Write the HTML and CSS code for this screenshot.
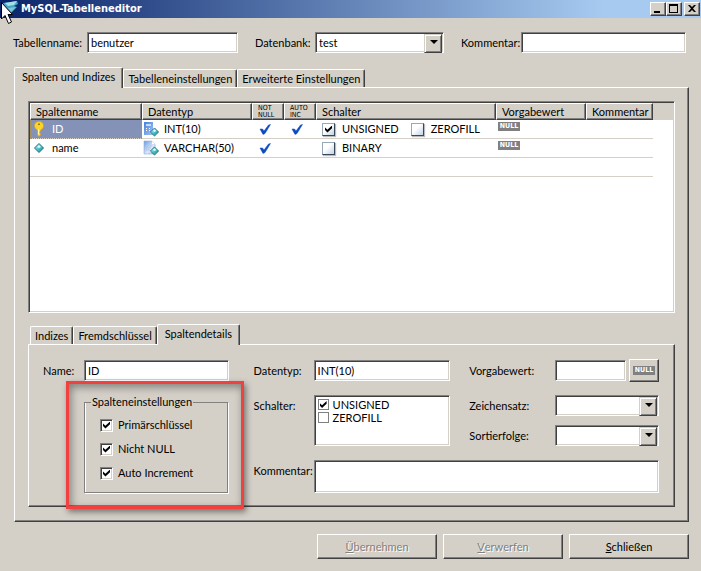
FILE: index.html
```html
<!DOCTYPE html>
<html lang="de">
<head>
<meta charset="utf-8">
<title>MySQL-Tabelleneditor</title>
<link rel="stylesheet" href="styles.css">
</head>
<body>
<svg width="0" height="0" class="defs" aria-hidden="true">
  <defs>
    <linearGradient id="gem" x1="0" y1="0" x2="1" y2="1"><stop offset="0" stop-color="#b8f4f4"/><stop offset=".5" stop-color="#4cc4cc"/><stop offset="1" stop-color="#187c90"/></linearGradient>
    <linearGradient id="sheet" x1="0" y1="0" x2="1" y2="1"><stop offset="0" stop-color="#6c9ce4"/><stop offset=".6" stop-color="#dce8f8"/><stop offset="1" stop-color="#a0bcec"/></linearGradient>
    <linearGradient id="calc" x1="0" y1="0" x2="1" y2="1"><stop offset="0" stop-color="#4880dc"/><stop offset="1" stop-color="#a4c4f4"/></linearGradient>
    <symbol id="tick" viewBox="0 0 12 11"><path d="M1 5 3.500 5l1.500 2L9.500 1 11.500 .5 6 9.500 4 10.500Z" fill="#0c4cc0" stroke="#0c4cc0" stroke-width=".5"/></symbol>
    <symbol id="diamond" viewBox="0 0 10 10"><path d="M5 .5 9.500 5 5 9.500 .5 5Z" fill="url(#gem)" stroke="#286c7c" stroke-width="1"/><path d="M5 2 7 4 5 5 3 4Z" fill="#d8ffff"/></symbol>
  </defs>
</svg>
<header class="titlebar">
  <svg class="app-icon" viewBox="0 0 19 18" width="19" height="18" aria-hidden="true">
    <path d="M3 3 17 1 18 4 14 6 17 7 11 13 7 12Z" fill="#48a4c0"/><path d="M5 3 17 1 14 5 8 6Z" fill="#a4e0ec"/><path d="M8 8 16 7 11 12Z" fill="#78c8dc"/>
  </svg>
  <h1>MySQL-Tabelleneditor</h1>
  <div class="window-buttons">
    <button type="button" aria-label="Minimieren"><svg viewBox="0 0 12 10" width="12" height="10"><path d="M2 7h6v2H2z"/></svg></button>
    <button type="button" aria-label="Maximieren"><svg viewBox="0 0 12 10" width="12" height="10"><path fill-rule="evenodd" d="M1 0h9v9H1zM2 2v6h7V2z"/></svg></button>
    <button type="button" class="close" aria-label="Fenster schließen"><svg viewBox="0 0 12 10" width="12" height="10"><path d="M2 1h2l2 2 2-2h2L7 4.500 10 8H8L6 6 4 8H2l3-3.500z"/></svg></button>
  </div>
  <svg class="cursor" viewBox="0 0 12 22" width="12" height="22" aria-hidden="true"><path d="M.5.5V17L4 13.500 7.500 21.500 10.500 20 7 12.500H11.500Z" fill="#fff" stroke="#000"/></svg>
</header>
<main>
  <form class="top-fields">
    <label for="tname">Tabellenname:</label>
    <input class="field" id="tname" value="benutzer">
    <label for="db">Datenbank:</label>
    <span class="combo"><select id="db" class="field"><option>test</option></select></span>
    <label for="tcomment">Kommentar:</label>
    <input class="field" id="tcomment">
  </form>

  <nav class="tabs" role="tablist">
    <button type="button" role="tab" aria-selected="true">Spalten und Indizes</button>
    <button type="button" role="tab">Tabelleneinstellungen</button>
    <button type="button" role="tab">Erweiterte Einstellungen</button>
  </nav>
  <section class="page outer">
    <div class="list">
      <table>
        <colgroup><col class="c-name"><col class="c-type"><col class="c-flag"><col class="c-flag"><col class="c-opts"><col class="c-default"><col class="c-comment"><col></colgroup>
        <thead><tr><th>Spaltenname</th><th>Datentyp</th><th class="tiny">NOT<br>NULL</th><th class="tiny">AUTO<br>INC</th><th>Schalter</th><th>Vorgabewert</th><th>Kommentar</th><td class="rest"></td></tr></thead>
        <tbody>
          <tr>
            <td class="selected"><div class="cell"><svg class="lead" viewBox="0 0 10 16" width="10" height="16"><path d="M5 .5C2 .5 .5 2.500 .5 4.500 .5 6.500 1.500 8 3.500 9V14L5 15.500 6.500 14V12.500L5.500 11.500 6.500 10.500V9C8.500 8 9.500 6.500 9.500 4.500 9.500 2.500 8 .5 5 .5Z" fill="#fcd428" stroke="#d8a010" stroke-width=".6"/><path d="M4 2.500h2v1.500H4z" fill="#94801c"/><path d="M4.500 8v5.500" stroke="#fff4a0"/></svg>ID</div></td>
            <td><div class="cell type"><svg viewBox="0 0 16 16" width="16" height="16"><path d="M1 1h9v13H1z" fill="url(#calc)"/><path d="M3 3h5v2H3z" fill="#c4dcfc"/><path d="M3 7h1v1H3zM6 7h1v1H6zM3 9h1v1H3zM6 9h1v1H6z" fill="#fff"/><use href="#diamond" x="7" y="6" width="9" height="10"/></svg>INT(10)</div></td>
            <td><svg class="tick" width="12" height="11"><use href="#tick"/></svg></td>
            <td><svg class="tick" width="12" height="11"><use href="#tick"/></svg></td>
            <td><div class="options"><label><input type="checkbox" class="glass" checked>UNSIGNED</label><label><input type="checkbox" class="glass">ZEROFILL</label></div></td>
            <td class="null-cell"><span class="null">NULL</span></td><td></td><td class="rest"></td>
          </tr>
          <tr>
            <td><div class="cell"><svg class="lead" viewBox="0 0 10 10" width="10" height="10"><use href="#diamond"/></svg>name</div></td>
            <td><div class="cell type"><svg viewBox="0 0 16 16" width="16" height="16"><path d="M1 1h8l3 3v10H1z" fill="url(#sheet)" stroke="#90b0dc" stroke-width=".6"/><path d="M9 1v3h3z" fill="#fff"/><path d="M3 6h6M3 8h5M3 10h4" stroke="#b4c8e4"/><use href="#diamond" x="7" y="6" width="9" height="10"/></svg>VARCHAR(50)</div></td>
            <td><svg class="tick" width="12" height="11"><use href="#tick"/></svg></td>
            <td></td>
            <td><div class="options"><label><input type="checkbox" class="glass">BINARY</label></div></td>
            <td class="null-cell"><span class="null">NULL</span></td><td></td><td class="rest"></td>
          </tr>
          <tr><td></td><td></td><td></td><td></td><td></td><td></td><td></td><td class="rest"></td></tr>
        </tbody>
      </table>
    </div>

    <nav class="tabs lower" role="tablist">
      <button type="button" role="tab">Indizes</button>
      <button type="button" role="tab">Fremdschlüssel</button>
      <button type="button" role="tab" aria-selected="true">Spaltendetails</button>
    </nav>
    <form class="page details">
      <label for="cname">Name:</label>
      <input class="field" id="cname" value="ID">
      <label class="mid" for="ctype">Datentyp:</label>
      <input class="field" id="ctype" value="INT(10)">
      <label class="right" for="cdefault">Vorgabewert:</label>
      <div class="default"><input class="field" id="cdefault"><button type="button" class="raised"><span class="null">NULL</span></button></div>

      <div class="settings">
        <fieldset>
          <legend>Spalteneinstellungen</legend>
          <label><input type="checkbox" class="box" checked>Primärschlüssel</label>
          <label><input type="checkbox" class="box" checked>Nicht NULL</label>
          <label><input type="checkbox" class="box" checked>Auto Increment</label>
        </fieldset>
        <div class="marker"></div>
      </div>

      <span class="mid label flags-label" id="flags">Schalter:</span>
      <div class="field checklist" role="group" aria-labelledby="flags">
        <label><input type="checkbox" class="flat" checked>UNSIGNED</label>
        <label><input type="checkbox" class="flat">ZEROFILL</label>
      </div>
      <div class="charset">
        <label for="charset">Zeichensatz:</label>
        <span class="combo"><select class="field" id="charset"><option></option></select></span>
        <label for="collation">Sortierfolge:</label>
        <span class="combo"><select class="field" id="collation"><option></option></select></span>
      </div>
      <label class="mid comment-label" for="ccomment">Kommentar:</label>
      <textarea class="field" id="ccomment"></textarea>
    </form>
  </section>
  <footer>
    <button type="button" class="raised" disabled><u>Ü</u>bernehmen</button>
    <button type="button" class="raised" disabled><u>V</u>erwerfen</button>
    <button type="button" class="raised"><u>S</u>chließen</button>
  </footer>
</main>
</body>
</html>
```
FILE: styles.css
```css
:root {
  --face: #d4d0c8;
  --shade: #808080;
  --dark: #404040;
}
* { box-sizing: border-box; }
body {
  margin: 0;
  background: var(--face);
  color: #000;
  font: 11px/14px Lato, "Liberation Sans", sans-serif;
}
button, input, select, textarea { font: inherit; color: inherit; margin: 0; border-radius: 0; }
.defs { position: absolute; }

.titlebar {
  position: relative;
  display: flex;
  align-items: center;
  height: 18px;
  padding-right: 1px;
  background: linear-gradient(90deg, #0a246a, #a6caf0 86%);
}
.titlebar h1 {
  flex: 1;
  margin: 0 0 0 2px;
  color: #fff;
  font: bold 11px/18px "DejaVu Sans Condensed", "DejaVu Sans", sans-serif;
}
.cursor { position: absolute; left: 1px; top: 2px; }
.window-buttons { display: flex; }
.window-buttons button {
  display: grid;
  place-items: center;
  width: 16px;
  height: 14px;
  padding: 0;
  background: var(--face);
  border: 1px solid;
  border-color: #fff var(--dark) var(--dark) #fff;
  box-shadow: inset -1px -1px var(--shade);
}
.window-buttons .close { margin-left: 2px; }

main { padding: 14px 12px 12px 13px; }
.top-fields {
  display: grid;
  grid-template-columns: 74px 151fr 77px 129fr 77px 165fr;
  align-items: center;
  margin-right: 3px;
}
.top-fields label { padding-left: 17px; white-space: nowrap; }
.top-fields label:first-child { padding-left: 0; }

.field {
  display: block;
  width: 100%;
  min-width: 0;
  height: 21px;
  padding: 0 3px;
  appearance: none;
  background: #fff;
  border: 1px solid;
  border-color: var(--shade) #fff #fff var(--shade);
  box-shadow: inset 1px 1px var(--dark), inset -1px -1px var(--face);
  outline: 0;
}
.combo { position: relative; display: block; }
.combo::before {
  content: "";
  position: absolute;
  right: 2px;
  top: 2px;
  width: 16px;
  height: 17px;
  background: var(--face);
  border: 1px solid;
  border-color: var(--face) var(--dark) var(--dark) var(--face);
  box-shadow: inset 1px 1px #fff, inset -1px -1px var(--shade);
  pointer-events: none;
}
.combo::after {
  content: "";
  position: absolute;
  right: 6px;
  top: 8px;
  border: 4px solid transparent;
  border-top-color: #000;
  border-bottom: 0;
  pointer-events: none;
}

.tabs { display: flex; align-items: flex-end; margin: 14px 0 0 1px; height: 20px; }
.tabs button {
  height: 18px;
  padding: 0 4px;
  white-space: nowrap;
  background: var(--face);
  border: 1px solid;
  border-color: #fff var(--dark) transparent #fff;
  border-bottom: 0;
  border-radius: 2px 2px 0 0;
  box-shadow: inset -1px 0 var(--shade);
}
.tabs button[aria-selected="true"] {
  position: relative;
  height: 21px;
  padding: 0 7px 3px;
  margin-bottom: -1px;
}
.page {
  border: 1px solid;
  border-color: #fff var(--dark) var(--dark) #fff;
  box-shadow: inset -1px -1px var(--shade);
}
.outer { margin-left: 1px; padding: 13px 13px 14px 13px; }

.list {
  min-height: 212px;
  background: #fff;
  border: 1px solid;
  border-color: var(--shade) #fff #fff var(--shade);
  box-shadow: inset 1px 1px var(--dark), inset -1px -1px var(--face);
  padding: 1px;
}
table { width: 100%; table-layout: fixed; border-collapse: separate; border-spacing: 0; }
.c-name { width: 112px; }
.c-type { width: 110px; }
.c-flag { width: 32px; }
.c-opts { width: 180px; }
.c-default { width: 90px; }
.c-comment { width: 67px; }
th {
  height: 17px;
  padding: 0 0 0 5px;
  font-weight: normal;
  text-align: left;
  background: var(--face);
  border: 1px solid;
  border-color: #fff var(--dark) var(--dark) #fff;
  box-shadow: inset -1px -1px var(--shade);
}
th.tiny { font: 7px/7px "DejaVu Sans Condensed", "DejaVu Sans", sans-serif; }
thead .rest { background: var(--face); }
tbody td { height: 19px; padding: 0; border-bottom: 1px solid var(--face); }
td.rest { border: 0; }
.selected { color: #fff; background: #8492b8; outline: 1px dotted #a8905c; outline-offset: -1px; }
.cell { display: flex; align-items: center; height: 18px; gap: 8px; padding-left: 4px; }
.cell.type { padding-left: 1px; gap: 5px; }
.tick { display: block; margin: 0 auto 0 7px; }
.options { display: flex; gap: 12px; padding-left: 6px; }
.options label { display: flex; align-items: center; gap: 7px; }
.null-cell { vertical-align: top; padding: 2px 2px 0; }
.null {
  display: block;
  width: 22px;
  height: 9px;
  background: var(--shade);
  color: #fff;
  font: bold 7px/9px "DejaVu Sans Condensed", "DejaVu Sans", sans-serif;
  text-align: center;
}

input[type="checkbox"] { position: relative; flex: none; appearance: none; width: 13px; height: 13px; background: #fff; }
input[type="checkbox"]:checked::before {
  content: "";
  position: absolute;
  inset: 2px;
  background: #000;
  clip-path: polygon(0 28%, 35% 60%, 100% 0, 100% 38%, 35% 100%, 0 66%);
}
input[type="checkbox"].glass {
  border: 1px solid #98a8b8;
  border-right-color: #384858;
  border-bottom-color: #384858;
  background: linear-gradient(135deg, #fff 40%, #c0d4e8);
  box-shadow: 1px 1px 1px #bbb;
}
input[type="checkbox"].flat { border: 1px solid var(--shade); width: 11px; height: 11px; }
input[type="checkbox"].flat:checked::before { inset: 1px; }
.box {
  border: 1px solid;
  border-color: var(--shade) #fff #fff var(--shade);
  box-shadow: inset 1px 1px var(--dark), inset -1px -1px var(--face);
}

.tabs.lower { margin: 11px 0 0; padding-left: 2px; }
.details {
  display: grid;
  grid-template-columns: 41px 145fr 85px 137fr 105px 104fr;
  grid-template-rows: 21px 51px 33px;
  row-gap: 14px;
  padding: 15px 15px 13px 14px;
}
.details > label, .details > .label { padding-top: 4px; }
.details > .mid { padding-left: 25px; }
.details > .right { padding-left: 19px; }
.default { display: flex; align-items: center; gap: 3px; min-width: 0; }
.default .field { flex: 1; }
.default .raised { width: 30px; height: 23px; padding: 0 3px; flex: none; }
.settings { position: relative; grid-area: 2 / 2 / 4 / 3; }
fieldset {
  height: 100%;
  margin: 0 1px 0 0;
  padding: 4px 15px 0;
  border: 1px solid var(--shade);
  box-shadow: 1px 1px #fff, inset 1px 0 #fff;
}
legend { padding: 0 1px; margin-left: -9px; }
fieldset label { display: flex; align-items: center; gap: 5px; height: 24px; white-space: nowrap; }
.marker {
  position: absolute;
  inset: -14px -15px -16px -18px;
  border: 3px solid #f04040;
  box-shadow: 2px 3px 6px rgba(0, 0, 0, .45), inset 2px 3px 8px rgba(0, 0, 0, .4);
  pointer-events: none;
}
.flags-label { grid-area: 2 / 3; }
.checklist { grid-area: 2 / 4; height: 51px; padding: 2px 3px; }
.checklist label { display: flex; align-items: center; height: 13px; gap: 4px; }
.charset {
  grid-area: 2 / 5 / 3 / 7;
  display: grid;
  grid-template-columns: 86px 1fr;
  align-content: space-between;
  align-items: center;
  padding-left: 19px;
}
.comment-label { grid-area: 3 / 3; }
#ccomment { grid-area: 3 / 4 / 4 / 7; height: 33px; resize: none; }

.raised {
  display: grid;
  grid-auto-flow: column;
  place-content: center;
  background: var(--face);
  border: 1px solid;
  border-color: #fff var(--dark) var(--dark) #fff;
  box-shadow: inset -1px -1px var(--shade);
}
footer { display: flex; justify-content: flex-end; gap: 6px; margin-top: 12px; }
footer .raised { width: 120px; height: 25px; }
.raised:disabled { color: var(--shade); text-shadow: 1px 1px #fff; }
```
